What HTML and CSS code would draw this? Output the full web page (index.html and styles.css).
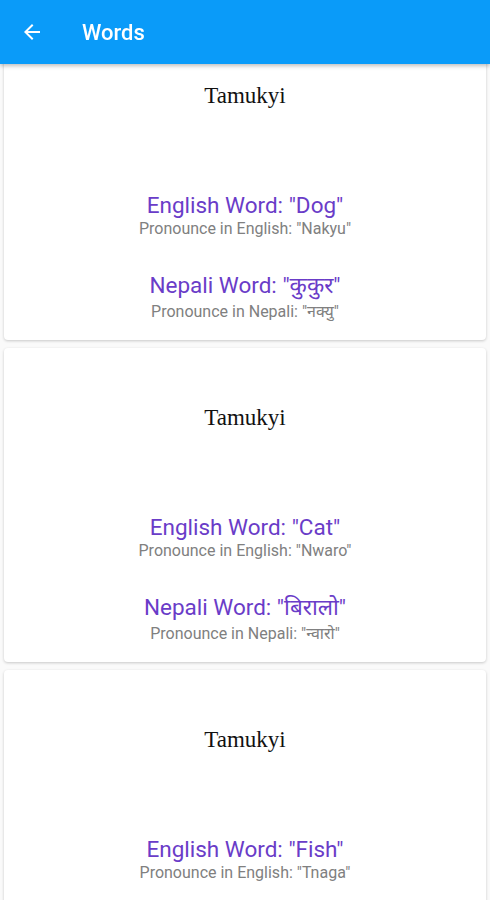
FILE: index.html
```html
<!DOCTYPE html>
<html lang="en">
<head>
    <meta charset="UTF-8">
    <meta name="viewport" content="width=device-width, initial-scale=1.0">
    <title>Words</title>
    <link rel="stylesheet" href="styles.css">
</head>
<body>
    <header class="app-bar">
        <a href="javascript:;" class="back-btn">
            <svg width="24" height="24" viewBox="0 0 24 24"><path d="M20 11H7.83l5.59-5.59L12 4l-8 8 8 8 1.41-1.41L7.83 13H20v-2z" fill="#fff"/></svg>
        </a>
        <h1 class="title">Words</h1>
    </header>

    <div class="word-list">
        <div class="word-card">
            <p class="lang-name">Tamukyi</p>
            <p class="word">English Word: "Dog"</p>
            <p class="pron">Pronounce in English: "Nakyu"</p>
            <p class="word nepali">Nepali Word: "कुकुर"</p>
            <p class="pron">Pronounce in Nepali: "नक्यु"</p>
        </div>
        <div class="word-card">
            <p class="lang-name">Tamukyi</p>
            <p class="word">English Word: "Cat"</p>
            <p class="pron">Pronounce in English: "Nwaro"</p>
            <p class="word nepali">Nepali Word: "बिरालो"</p>
            <p class="pron">Pronounce in Nepali: "न्वारो"</p>
        </div>
        <div class="word-card">
            <p class="lang-name">Tamukyi</p>
            <p class="word">English Word: "Fish"</p>
            <p class="pron">Pronounce in English: "Tnaga"</p>
            <p class="word nepali">Nepali Word: "माछा"</p>
            <p class="pron">Pronounce in Nepali: "त्नागा"</p>
        </div>
    </div>
</body>
</html>
```

FILE: styles.css
```css
body {
    margin: 0;
    background-color: #fafafa;
    font-family: Roboto, "Noto Sans", sans-serif;
}

.app-bar {
    position: fixed;
    top: 0;
    left: 0;
    right: 0;
    z-index: 10;
    height: 64px;
    display: flex;
    align-items: center;
    background-color: #0a9bf9;
    box-shadow: 0 2px 4px rgba(0, 0, 0, .25);
}

.back-btn {
    display: flex;
    margin-left: 20px;
    width: 24px;
    height: 24px;
}

.title {
    margin: 0 0 0 38px;
    font-size: 22px;
    font-weight: 500;
    color: #fff;
}

.word-list {
    padding: 26px 4px 0;
    display: flex;
    flex-direction: column;
    gap: 8px;
}

.word-card {
    background-color: #fff;
    border-radius: 4px;
    box-shadow: 0 1px 3px rgba(0, 0, 0, .2);
    padding: 55px 0 18px;
    height: 314px;
    box-sizing: border-box;
    text-align: center;
}

.word-card p {
    margin: 0;
}

.lang-name {
    font-family: "Liberation Serif", serif;
    font-size: 23px;
    line-height: 30px;
    color: #111;
    margin-bottom: 80px !important;
}

.word {
    font-size: 22.5px;
    line-height: 28px;
    color: #6a3cc8;
}

.word.nepali {
    margin-top: 32px !important;
    margin-bottom: 3px !important;
}

.pron {
    font-size: 16px;
    line-height: 20px;
    color: #808080;
}
```
